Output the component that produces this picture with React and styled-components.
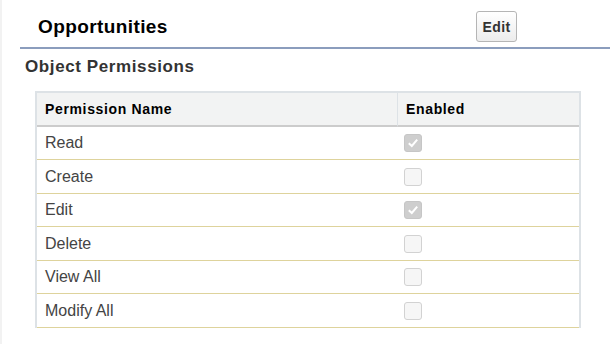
import React from 'react';
import styled, { createGlobalStyle } from 'styled-components';

const GlobalStyle = createGlobalStyle`
  html, body {
    margin: 0;
    padding: 0;
    background: #fff;
    font-family: "Liberation Sans", Arial, sans-serif;
  }
`;

const Page = styled.div`
  width: 610px;
  height: 344px;
  box-sizing: border-box;
  border-left: 2px solid #f2f2f2;
  overflow: hidden;
`;

const TitleBar = styled.div`
  display: flex;
  align-items: center;
  box-sizing: border-box;
  height: 49px;
  margin-left: 18px;
  padding: 6px 93px 0 18px;
  border-bottom: 2px solid #8b9dbd;
`;

const Title = styled.h2`
  flex: 1;
  margin: 0;
  font-size: 19px;
  font-weight: bold;
  letter-spacing: 0.4px;
  color: #000;
`;

const EditButton = styled.button`
  width: 41px;
  height: 31px;
  padding: 0;
  border: 1px solid #b5b5b5;
  border-radius: 3px;
  background: linear-gradient(#ffffff, #ececec);
  font-family: inherit;
  font-size: 14px;
  font-weight: bold;
  letter-spacing: 0.4px;
  color: #333;
`;

const SectionTitle = styled.h3`
  margin: 8px 0 0 23px;
  font-size: 17px;
  font-weight: bold;
  letter-spacing: 0.6px;
  color: #333;
`;

const Table = styled.table`
  margin: 14px 0 0 33px;
  width: 546px;
  border-collapse: separate;
  border-spacing: 0;
  border: 2px solid #dde2e6;
  border-bottom: none;
`;

const HeadCell = styled.th`
  height: 32px;
  padding: 0 0 0 8px;
  background: #f2f3f3;
  border-bottom: 2px solid #cccccc;
  border-left: ${p => (p.$divider ? '1px solid #dde2e6' : 'none')};
  text-align: left;
  font-size: 14px;
  font-weight: bold;
  letter-spacing: 0.65px;
  color: #000;
  width: ${p => p.$width};
`;

const Row = styled.tr`
  height: 33px;
  &:nth-child(even) {
    height: 34px;
  }
`;

const Cell = styled.td`
  padding: 0 0 0 ${p => (p.$box ? '7px' : '8px')};
  border-bottom: 1px solid #ded39c;
  font-size: 16px;
  color: #444;
`;

const Box = styled.span`
  display: block;
  width: 18px;
  height: 18px;
  box-sizing: border-box;
  border-radius: 3px;
  border: 1px solid ${p => (p.$checked ? '#c6c6c6' : '#d2d2d2')};
  background: ${p => (p.$checked ? '#cecece' : '#f6f6f6')};
  svg {
    display: block;
  }
`;

function Check({ checked }) {
  return (
    <Box $checked={checked}>
      {checked && (
        <svg width="16" height="16" viewBox="0 0 16 16">
          <path d="M3.8 8.2 L6.8 11 L12.2 4.6" fill="none" stroke="#fff" strokeWidth="2" />
        </svg>
      )}
    </Box>
  );
}

const permissions = [
  { name: 'Read', enabled: true },
  { name: 'Create', enabled: false },
  { name: 'Edit', enabled: true },
  { name: 'Delete', enabled: false },
  { name: 'View All', enabled: false },
  { name: 'Modify All', enabled: false },
];

export default function App() {
  return (
    <>
      <GlobalStyle />
      <Page>
        <TitleBar>
          <Title>Opportunities</Title>
          <EditButton>Edit</EditButton>
        </TitleBar>
        <SectionTitle>Object Permissions</SectionTitle>
        <Table>
          <thead>
            <tr>
              <HeadCell $width="352px">Permission Name</HeadCell>
              <HeadCell $divider>Enabled</HeadCell>
            </tr>
          </thead>
          <tbody>
            {permissions.map(p => (
              <Row key={p.name}>
                <Cell>{p.name}</Cell>
                <Cell $box>
                  <Check checked={p.enabled} />
                </Cell>
              </Row>
            ))}
          </tbody>
        </Table>
      </Page>
    </>
  );
}
